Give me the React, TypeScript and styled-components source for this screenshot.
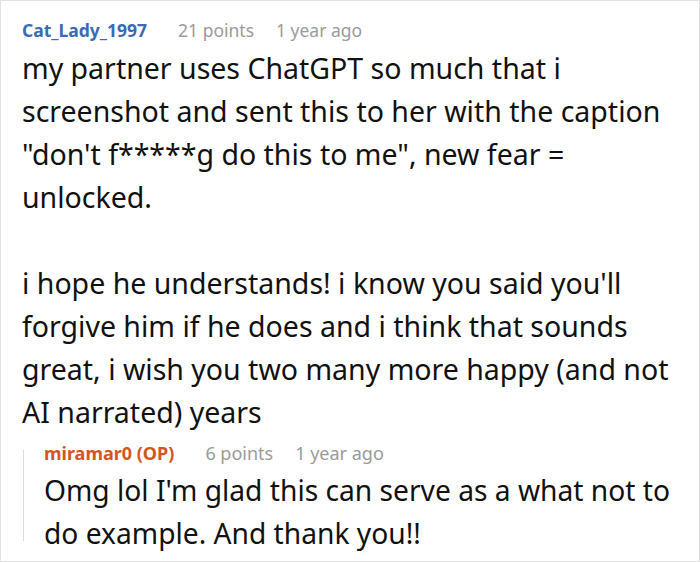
import React from "react";
import styled, { createGlobalStyle } from "styled-components";

const Global = createGlobalStyle`
  html, body { margin: 0; padding: 0; background: #fff; }
  * { box-sizing: border-box; }
`;

const Card = styled.div`
  width: 700px;
  height: 562px;
  border: 1px solid #e2e2e2;
  background: #fff;
  padding: 16px 18px 0 21px;
  overflow: hidden;
  font-family: "Noto Sans", "Open Sans", sans-serif;
`;

const Meta = styled.div`
  display: flex;
  align-items: center;
  gap: 22px;
  height: 26px;
  font-size: 17.5px;
  line-height: 26px;
`;

const Author = styled.span<{ $op?: boolean }>`
  font-weight: 700;
  margin-right: 9px;
  color: ${(p) => (p.$op ? "#d4561f" : "#3b6bb3")};
`;

const Info = styled.span`
  color: #9b9b9b;
`;

const Body = styled.div`
  margin-top: 4px;
  font-size: 28.5px;
  line-height: 43px;
  color: #111;
`;

const Para = styled.p`
  margin: 0 0 43px;
  &:last-child { margin-bottom: 0; }
`;

const Reply = styled.div`
  position: relative;
  margin-top: 6px;
  padding-left: 22px;
  &::before {
    content: "";
    position: absolute;
    left: 1px;
    top: 10px;
    height: 91px;
    width: 1px;
    background: #dcdcdc;
  }
`;

const ReplyMeta = styled(Meta)`
  font-size: 18px;
`;

const ReplyBody = styled(Body)`
  margin-top: 3px;
  font-size: 28.2px;
`;

export default function App() {
  return (
    <>
      <Global />
      <Card>
        <Meta>
          <Author>Cat_Lady_1997</Author>
          <Info>21 points</Info>
          <Info>1 year ago</Info>
        </Meta>
        <Body>
          <Para>
            my partner uses ChatGPT so much that i screenshot and sent this to her with the caption "don't f*****g do this to me", new fear = unlocked.
          </Para>
          <Para>
            i hope he understands! i know you said you'll forgive him if he does and i think that sounds great, i wish you two many more happy (and not AI narrated) years
          </Para>
        </Body>
        <Reply>
          <ReplyMeta>
            <Author $op>miramar0 (OP)</Author>
            <Info>6 points</Info>
            <Info>1 year ago</Info>
          </ReplyMeta>
          <ReplyBody>
            Omg lol I'm glad this can serve as a what not to do example. And thank you!!
          </ReplyBody>
        </Reply>
      </Card>
    </>
  );
}
